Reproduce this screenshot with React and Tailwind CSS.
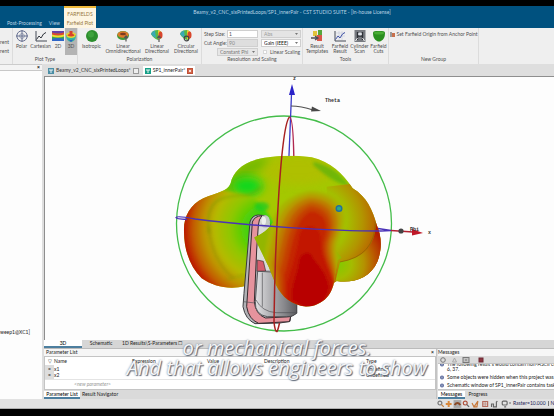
import React, { useState } from 'react';

const messages = [
    'The following result s would contain non-ASCII characters:',
    'Some objects were hidden when this project was last saved.',
    'Schematic window of SP1_innerPair contains tasks in the navigation tree.',
];

function PolarIcon() {
    return (
        <svg viewBox="0 0 12 12" className="w-[12px] h-[12px]" fill="none" stroke="#5a6488" strokeWidth="0.9">
            <circle cx="6" cy="6" r="5.2" />
            <circle cx="6" cy="6" r="2.4" strokeWidth="0.5" />
            <path d="M6 0v12M0 6h12" />
        </svg>
    );
}

function CurveIcon({ blue }) {
    return (
        <svg viewBox="0 0 12 12" className="w-[12px] h-[12px]" fill="none" stroke="#444b57" strokeWidth="1">
            {blue && <path d="M2 3h9M2 6h9M5 1v9M8 1v9" stroke="#b9c3d6" strokeWidth="0.5" />}
            <path d="M1 1v10h11" />
            <path d="M1.5 9.5L4 6l2 2 2.5-4L11 2.5" stroke={blue ? '#4355a8' : '#30343c'} />
        </svg>
    );
}

function Plot2DIcon() {
    return (
        <svg viewBox="0 0 12 12" className="w-[12px] h-[12px]">
            <rect y="1" width="12" height="10" fill="#35a852" />
            <path d="M0 1h12v1.5q-6 2-12 0z" fill="#6a3fa8" />
            <path d="M0 2.5q6 2 12 0v2q-6 2-12 0z" fill="#e34234" />
            <path d="M0 4.5q6 2 12 0v2q-6 2-12 0z" fill="#f2dc31" />
            <path d="M0 9q6-2 12 0v2H0z" fill="#2f66c8" />
        </svg>
    );
}

function Plot3DIcon() {
    return (
        <svg viewBox="0 0 12 12" className="w-[12px] h-[12px]">
            <path d="M1 5q5-3 10 0 0 6-5 7-5-1-5-7z" fill="#36b8a0" />
            <path d="M1 4q5-4 10 0l-1 3q-4 2-8 0z" fill="#e6d630" />
            <path d="M4.5 4V1h3v3q2 0 2 1.5-3 2-7 0 0-1.5 2-1.5z" fill="#d8402c" />
            <path d="M3 9q3 2 6 0l-3 3z" fill="#2c62c0" />
        </svg>
    );
}

function SphereIcon() {
    return (
        <svg viewBox="0 0 12 12" className="w-[12px] h-[12px]">
            <circle cx="6" cy="6" r="6" fill="#2c8e2d" />
            <circle cx="5" cy="4.5" r="3" fill="#3da23c" />
        </svg>
    );
}

function OmniIcon() {
    return (
        <svg viewBox="0 0 12 12" className="w-[12px] h-[12px]">
            <ellipse cx="6" cy="5.5" rx="6" ry="4.5" fill="#3f9a3a" />
            <ellipse cx="6" cy="4.5" rx="5.5" ry="3.3" fill="#dd7a2a" />
            <ellipse cx="6" cy="4" rx="3" ry="1.3" fill="#7b3c20" />
            <path d="M9 11.5V6M7.3 8L9 6l1.7 2" stroke="#555" strokeWidth="1.2" fill="none" />
        </svg>
    );
}

function LobeIcon({ circular }) {
    return (
        <svg viewBox="0 0 12 12" className="w-[12px] h-[12px]">
            <path d="M0 4q1-4 7-4 4 1 4 5 0 4-4 5-5-2-7-6z" fill="#55b848" />
            <path d="M0 4q1-3 4-3.5l1 7.5Q1 6 0 4z" fill="#39a9b4" />
            <path d="M7 0q4 1 4 5 0 4-4 4.5z" fill="#e8cf2f" />
            <ellipse cx="9.5" cy="5" rx="2" ry="3.5" fill="#d9452c" />
            {circular
                ? <circle cx="6.5" cy="8.5" r="2.3" fill="none" stroke="#444" strokeWidth="1.2" />
                : <path d="M8 12V6M6.3 8L8 6l1.7 2" stroke="#555" strokeWidth="1.2" fill="none" />}
        </svg>
    );
}

function TemplatesIcon() {
    return (
        <svg viewBox="0 0 12 12" className="w-[12px] h-[12px]">
            <path d="M7 0h4v5h-4z" fill="#55a63a" />
            <path d="M2 1h4v5H2z" fill="#e2c33a" />
            <path d="M6 5h5v6H6z" fill="#d8564a" />
            <path d="M0 8h6M4 6l3 2-3 2" stroke="#4e4e58" strokeWidth="1.3" fill="none" />
        </svg>
    );
}

function CylinderIcon() {
    return (
        <svg viewBox="0 0 12 12" className="w-[12px] h-[12px]">
            <rect x="0.5" y="0" width="11" height="12" fill="#777a80" />
            <path d="M3.5 2v8M8.5 2v8M3.5 6h5" stroke="#2d3036" strokeWidth="1.3" />
            <ellipse cx="6" cy="4" rx="2" ry="1.5" fill="#dfe2e8" />
            <path d="M1.5 11l2-3M10.5 11l-2-3" stroke="#f2f2f2" strokeWidth="1" />
        </svg>
    );
}

function CutsIcon() {
    return (
        <svg viewBox="0 0 12 12" className="w-[12px] h-[12px]">
            <path d="M0 3q0-2 3-2h6q3 0 3 2 0 6-4 8-2 1-4 0-4-2-4-8z" fill="#2a8f1f" />
            <ellipse cx="6" cy="3" rx="5" ry="1.5" fill="#49ac35" />
        </svg>
    );
}

function RibbonButton({ icon, label, sub, className = '', active }) {
    return (
        <button type="button" className={`flex flex-col items-center pt-[2px] h-[27px] leading-[5px] whitespace-nowrap ${active ? 'bg-[#b4b4b4]' : ''} ${className}`}>
            {icon}
            <span className="mt-[2px]">{label}</span>
            {sub && <span>{sub}</span>}
        </button>
    );
}

function RibbonGroup({ title, className = '', children }) {
    return (
        <section className={`flex flex-col justify-between shrink-0 border-r border-[#dcdcdc] ${className}`}>
            <div className="flex justify-center">{children}</div>
            <h2 className="text-center leading-[5px] pb-[2px]">{title}</h2>
        </section>
    );
}

function Picker({ label, value, disabled, className = '' }) {
    return (
        <span className={`grid items-center h-[8px] border border-[#cfcfcf] ${className}`}>
            <select aria-label={label} disabled={disabled} className="appearance-none [grid-area:1/1] w-full h-[6px] px-[2px]">
                <option>{value}</option>
            </select>
            <svg viewBox="0 0 3 2" className="[grid-area:1/1] justify-self-end mr-[2px] w-[3px] h-[2px] pointer-events-none">
                <path d="M0 0h3L1.5 2z" fill="#777777" />
            </svg>
        </span>
    );
}

function Ribbon() {
    return (
        <div className="flex h-[36px] bg-[#efefef] text-[#505050] overflow-hidden">
            <div className="w-[13px] shrink-0 border-r border-[#dcdcdc] pt-[12px] overflow-hidden">
                <div className="flex flex-col items-end gap-[4px] pr-[3px] leading-[5px]">
                    <span>Transparent</span>
                    <span>Current</span>
                </div>
            </div>
            <RibbonGroup title="Plot Type" className="w-[65px]">
                <RibbonButton icon={<PolarIcon />} label="Polar" className="w-[17px]" />
                <RibbonButton icon={<CurveIcon />} label="Cartesian" className="w-[21px]" />
                <RibbonButton icon={<Plot2DIcon />} label="2D" className="w-[14px]" />
                <RibbonButton icon={<Plot3DIcon />} label="3D" className="w-[12px]" active />
            </RibbonGroup>
            <RibbonGroup title="Polarization" className="w-[124px]">
                <RibbonButton icon={<SphereIcon />} label="Isotropic" className="w-[25px]" />
                <RibbonButton icon={<OmniIcon />} label="Linear" sub="Omnidirectional" className="w-[38px]" />
                <RibbonButton icon={<LobeIcon />} label="Linear" sub="Directional" className="w-[30px]" />
                <RibbonButton icon={<LobeIcon circular />} label="Circular" sub="Directional" className="w-[28px]" />
            </RibbonGroup>
            <RibbonGroup title="Resolution and Scaling" className="w-[101px]">
                <div className="grid grid-cols-[54px_40px] gap-x-[3px] gap-y-[1px] w-full pl-[2px] pt-[2px] leading-[5px] whitespace-nowrap">
                    <label className="flex items-center justify-between h-[8px]">
                        Step Size:
                        <input defaultValue="1" className="w-[31px] h-[8px] px-[1px] bg-white border border-[#cfcfcf]" />
                    </label>
                    <Picker label="Quantity" value="Abs" disabled className="w-[40px] bg-[#e4e4e4] text-[#999999]" />
                    <label className="flex items-center justify-between h-[8px]">
                        Cut Angle:
                        <input disabled defaultValue="90" className="w-[31px] h-[8px] px-[1px] bg-[#dedede] text-[#888888] border border-[#cfcfcf]" />
                    </label>
                    <Picker label="Gain" value="Gain (IEEE)" className="w-[40px] bg-white text-[#111111]" />
                    <Picker label="Cut plane" value="Constant Phi" disabled className="w-[41px] justify-self-end bg-[#e6e6e6] text-[#777777]" />
                    <label className="flex items-center gap-[3px] h-[8px] pl-[2px]">
                        <input type="checkbox" className="appearance-none w-[4px] h-[4px] bg-white border border-[#d8d8d8]" />
                        Linear Scaling
                    </label>
                </div>
            </RibbonGroup>
            <RibbonGroup title="Tools" className="w-[86px]">
                <RibbonButton icon={<TemplatesIcon />} label="Result" sub="Templates" className="w-[27px]" />
                <RibbonButton icon={<CurveIcon blue />} label="Farfield" sub="Result" className="w-[19px]" />
                <RibbonButton icon={<CylinderIcon />} label="Cylinder" sub="Scan" className="w-[20px]" />
                <RibbonButton icon={<CutsIcon />} label="Farfield" sub="Cuts" className="w-[18px]" />
            </RibbonGroup>
            <RibbonGroup title="New Group" className="w-[90px]">
                <button type="button" className="flex items-center gap-[2px] h-[12px] leading-[5px] whitespace-nowrap">
                    <svg viewBox="0 0 5 5" className="w-[5px] h-[5px]">
                        <path d="M0 0h2v5H0z" fill="#9a9a9a" />
                        <path d="M2 1h3v4H2z" fill="#c8704c" />
                    </svg>
                    Set Farfield Origin from Anchor Point
                </button>
            </RibbonGroup>
        </div>
    );
}

function DocTab({ color, label, active }) {
    return (
        <button type="button" className={`flex items-center gap-[2px] h-[9px] px-[2px] leading-[5px] whitespace-nowrap ${active ? 'bg-white text-[#222222]' : 'text-[#333333]'}`}>
            <svg viewBox="0 0 6 6" className="w-[6px] h-[6px] shrink-0">
                <rect width="6" height="6" fill={color} />
                <path d="M1 2h4M3 2v3" stroke="#ffffff" strokeWidth="0.9" />
            </svg>
            <span>{label}</span>
            <svg viewBox="0 0 6 6" className="w-[6px] h-[6px] shrink-0">
                <rect x="0.5" y="0.5" width="5" height="5" fill={active ? '#d4674c' : '#eeeeee'} stroke={active ? '#c05238' : '#9a9a9a'} />
                {active && <path d="M2 2l2 2M4 2L2 4" stroke="#ffffff" strokeWidth="0.8" />}
            </svg>
        </button>
    );
}

// Radiation pattern and phone, drawn on a grid three times finer than the plot
function Pattern() {
    return (
        <g transform="translate(170 150) scale(0.33333)">
            <defs>
                <filter id="soft" x="-20%" y="-20%" width="140%" height="140%">
                    <feGaussianBlur stdDeviation="5" />
                </filter>
                <filter id="softer" x="-30%" y="-30%" width="160%" height="160%">
                    <feGaussianBlur stdDeviation="14" />
                </filter>
                <radialGradient id="leftLobe" gradientUnits="userSpaceOnUse" cx="285" cy="235" r="250">
                    <stop offset="0" stopColor="#1ed41c" />
                    <stop offset="0.25" stopColor="#4fd008" />
                    <stop offset="0.42" stopColor="#8ec800" />
                    <stop offset="0.6" stopColor="#b4ba00" />
                    <stop offset="0.74" stopColor="#bf9200" />
                    <stop offset="0.86" stopColor="#c25c00" />
                    <stop offset="0.94" stopColor="#c02800" />
                    <stop offset="1" stopColor="#b41000" />
                </radialGradient>
                <radialGradient id="rightLobe" gradientUnits="userSpaceOnUse" cx="430" cy="215" r="205">
                    <stop offset="0.4" stopColor="#9cc000" stopOpacity="0" />
                    <stop offset="0.55" stopColor="#a8b400" />
                    <stop offset="0.72" stopColor="#b29400" />
                    <stop offset="0.86" stopColor="#b87200" />
                    <stop offset="1" stopColor="#b44a00" />
                </radialGradient>
                <radialGradient id="rearLobe" gradientUnits="userSpaceOnUse" cx="500" cy="340" r="150">
                    <stop offset="0" stopColor="#7ccc00" />
                    <stop offset="0.3" stopColor="#a4bc00" />
                    <stop offset="0.55" stopColor="#b49200" />
                    <stop offset="0.75" stopColor="#ba5c00" />
                    <stop offset="1" stopColor="#b41e00" />
                </radialGradient>
                <linearGradient id="metal" x1="0" x2="1">
                    <stop offset="0" stopColor="#e2e2e4" />
                    <stop offset="0.35" stopColor="#b2b2b5" />
                    <stop offset="0.7" stopColor="#88888c" />
                    <stop offset="1" stopColor="#5c5c60" />
                </linearGradient>
                <clipPath id="body">
                    <path d="M42 245C40 200 60 165 100 145C140 128 172 126 182 100C188 68 215 40 262 28C305 16 380 14 425 22C482 36 520 72 548 115C590 140 608 180 620 225C636 260 636 300 622 335C600 385 550 400 500 393L490 400L300 330L225 408C180 420 130 410 95 385C60 350 42 300 42 245z" />
                </clipPath>
                <clipPath id="front">
                    <path d="M252 262Q290 245 310 215L260 90H560V300L503 330Q500 350 494 380C492 430 460 468 408 470C365 466 335 440 318 405L296 350z" />
                </clipPath>
            </defs>

            <g clipPath="url(#body)">
                <rect x="30" y="0" width="620" height="430" fill="#a4c800" />
                <ellipse cx="385" cy="60" rx="110" ry="45" fill="#b4bc00" opacity="0.7" filter="url(#softer)" />
                <path d="M150 140Q190 20 300 20L270 60Q200 90 180 150z" fill="#6fb800" filter="url(#softer)" />
                <ellipse cx="232" cy="108" rx="46" ry="28" fill="#0ed81c" filter="url(#softer)" />
                <path d="M-20 120H150L240 138Q290 170 320 240L260 450H-20z" fill="url(#leftLobe)" filter="url(#soft)" />
                <path d="M118 250Q105 170 150 148Q185 134 230 136Q255 130 275 110" fill="none" stroke="#5c9400" strokeWidth="5" opacity="0.45" filter="url(#soft)" />
                <path d="M116 230Q125 330 190 385" fill="none" stroke="#7c7c00" strokeWidth="5" opacity="0.4" filter="url(#soft)" />
                <path d="M170 388Q200 384 222 374" fill="none" stroke="#7ca000" strokeWidth="6" opacity="0.4" filter="url(#soft)" />
                <path d="M430 35Q500 50 540 110Q490 100 430 45z" fill="#4cae10" opacity="0.6" filter="url(#soft)" />
                <path d="M470 110L560 100L660 200L640 420H480z" fill="url(#rightLobe)" />
                <path d="M618 215Q618 320 510 336L490 420H680V215z" fill="url(#rearLobe)" />
                <path d="M616 215Q616 318 510 336" fill="none" stroke="#8c6400" strokeWidth="3" opacity="0.7" />
            </g>

            {/* device */}
            <path d="M240 216Q246 196 264 195L286 197Q298 205 299 222L330 400L380 466V490L362 500L360 514L330 519L255 521Q226 508 219 470L222 430z" fill="#b2b2b6" stroke="#3a3a3e" strokeWidth="3" />
            <path d="M264 197L286 197Q298 205 299 222L330 360H260z" fill="#d9dad8" />
            <path d="M247 216Q254 198 276 197Q266 208 265 226L260 300L253 455Q256 492 286 504L362 500L358 515L266 520Q236 508 230 470z" fill="#e6939d" stroke="#352a2e" strokeWidth="3" />
            <path d="M262 330L280 334L287 363L261 364z" fill="#d45c6c" stroke="#3a2a2e" strokeWidth="2" />
            <path d="M263 364L305 366L380 440V488Q372 500 350 500H292Q254 494 256 455z" fill="url(#metal)" stroke="#444448" strokeWidth="2.5" />
            <path d="M220 455l35 4M258 450q18 35 60 38h62M277 470V368" fill="none" stroke="#505054" strokeWidth="2" />
            <ellipse cx="286" cy="215" rx="14" ry="19" fill="#c4c8c4" />
            <ellipse cx="281" cy="212" rx="7" ry="12" fill="#eef0ee" />

            {/* front lobe, one shape per gain band */}
            <g clipPath="url(#front)">
                <path d="M252 262Q290 245 312 215L420 200L520 330L494 480H250z" fill="#93b600" />
                <g filter="url(#soft)">
                    <path d="M300 480L280 330C298 250 295 145 420 122C530 125 540 200 512 260C490 310 515 330 515 400L480 490z" fill="#a9b400" />
                    <path d="M315 490L292 330C314 260 312 155 420 132C515 135 526 205 502 260C482 305 508 335 505 400L480 490z" fill="#b59c00" />
                    <path d="M325 490L306 340C327 270 327 165 420 144C504 148 514 212 493 262C474 302 500 338 500 400L480 490z" fill="#bd7c00" />
                    <path d="M330 490L318 350C338 285 342 176 422 156C490 161 502 216 482 264C466 304 492 340 498 400L480 490z" fill="#c25c00" />
                    <path d="M335 490L330 360C350 300 356 188 424 168C480 176 490 220 474 266C458 306 484 345 496 400L480 490z" fill="#c44000" />
                    <path d="M342 490L342 375C362 318 370 200 424 182C470 190 478 226 464 268C452 310 480 350 494 400L480 490z" fill="#c42800" />
                    <path d="M348 470L352 395C370 338 382 296 388 256C398 218 446 218 452 262C450 310 474 350 492 400L480 490z" fill="#c21600" />
                    <path d="M364 450C362 400 384 370 386 330C396 300 424 302 430 325C446 345 470 370 478 410C470 460 440 474 400 472z" fill="#b80400" />
                </g>
            </g>
            <ellipse cx="275" cy="170" rx="22" ry="14" fill="#14cc24" opacity="0.7" filter="url(#soft)" />
        </g>
    );
}

function FarfieldPlot() {
    return (
        <svg viewBox="45 77 509 263" className="block w-full h-[263px]" role="img" aria-label="3D farfield plot">
            <circle cx="284" cy="223.5" r="107.5" fill="none" stroke="#44bd4a" strokeWidth="1.3" />

            <path d="M288 180L291.5 94" stroke="#3a3ac8" strokeWidth="1.3" />
            <path d="M292 84l-3 11h6z" fill="#2a22c8" />
            <path d="M291 106q10 0 22 4" fill="none" stroke="#505050" strokeWidth="1.2" />
            <path d="M312 106.5l9 4.5-10 0.5z" fill="#484848" />
            <path d="M294 180C294 145 293 117 289.5 117" fill="none" stroke="#b02850" strokeWidth="1.5" />

            <Pattern />

            {/* cut lines and pointer */}
            <path d="M289.5 117C281 125 275 240 274 322Q275 332 277 331.5Q278 330 279.5 323" fill="none" stroke="#a82020" strokeWidth="1.5" />
            <path d="M187 219.5Q176 219 176 217.5Q177 215.5 195 219C250 226 330 231 381 231L391 230.5L378 228.5" fill="none" stroke="#4a32b8" strokeWidth="1.4" />
            <path d="M391 230.5L413 232" stroke="#b02030" strokeWidth="1.3" />
            <path d="M412 229l11 4-11 2.5z" fill="#c01828" />
            <circle cx="401" cy="231" r="2.6" fill="#444444" />
            <circle cx="339" cy="208.5" r="2.8" fill="#2aa98a" stroke="#236f9c" strokeWidth="1.4" />

            <g fill="#303030" fontSize="5" fontWeight="bold" fontFamily="Liberation Mono, monospace">
                <text x="325" y="102">Theta</text>
                <text x="410" y="231">Phi</text>
                <text x="428" y="234">x</text>
                <text x="293" y="80">z</text>
            </g>
        </svg>
    );
}

function BottomTab({ active, onClick, className = '', children }) {
    return (
        <button type="button" onClick={onClick}
            className={`h-[8px] leading-[5px] px-[2px] whitespace-nowrap border-b-2 ${active ? 'bg-white border-[#4d7f9f] text-black' : 'border-transparent text-[#222222]'} ${className}`}>
            {children}
        </button>
    );
}

function ParameterList() {
    const [tab, setTab] = useState('params');

    return (
        <section className="flex-1 min-w-0 flex flex-col">
            <h2 className="flex justify-between h-[7px] px-[2px] leading-[7px] bg-[#f6f6f6] text-[#222222]">
                Parameter List <button type="button" aria-label="Close" className="font-bold">×</button>
            </h2>
            <div className="h-[34px] bg-white border border-[#c4c4c4] overflow-hidden">
                <table className="w-full table-fixed text-left leading-[6px] text-[#222222]">
                    <thead>
                        <tr className="h-[8px]">
                            <th className="w-[9px] p-0 text-center font-normal">▽</th>
                            <th className="w-[78px] p-0 font-normal">Name</th>
                            <th className="w-[75px] p-0 font-normal">Expression</th>
                            <th className="w-[57px] p-0 font-normal">Value</th>
                            <th className="w-[102px] p-0 font-normal">Description</th>
                            <th className="p-0 font-normal">Type</th>
                        </tr>
                    </thead>
                    <tbody>
                        <tr className="h-[7px]">
                            <td className="p-0 text-center bg-[#dddddd]">=</td>
                            <td className="p-0">x1</td><td /><td /><td />
                            <td className="p-0">Undefined</td>
                        </tr>
                        <tr className="h-[7px] border-b border-[#e4e4e4]">
                            <td className="p-0 text-center bg-[#dddddd]">=</td>
                            <td className="p-0">x2</td><td /><td /><td />
                            <td className="p-0">Undefined</td>
                        </tr>
                        <tr className="h-[9px]">
                            <td className="p-0" />
                            <td colSpan="5" className="p-0 pl-[20px] italic text-[#999999]">&lt;new parameter&gt;</td>
                        </tr>
                    </tbody>
                </table>
            </div>
            <div className="flex h-[9px] bg-[#dadada] pt-[1px]">
                <BottomTab active={tab === 'params'} onClick={() => setTab('params')} className="w-[36px]">Parameter List</BottomTab>
                <BottomTab active={tab === 'results'} onClick={() => setTab('results')} className="w-[40px]">Result Navigator</BottomTab>
            </div>
        </section>
    );
}

function Messages() {
    return (
        <section className="w-[118px] shrink-0 flex flex-col pl-[1px] border-l border-[#c4c4c4]">
            <h2 className="h-[7px] leading-[7px] bg-[#f6f6f6] text-[#222222]">Messages</h2>
            <div className="flex items-center gap-[6px] h-[7px] px-[2px] bg-[#dcdcdc]">
                <svg viewBox="0 0 46 6" className="w-[46px] h-[6px]" fill="none" stroke="#777777">
                    <circle cx="3" cy="3" r="2.3" />
                    <path d="M14.5 1l2 4h-4z" stroke="#aaaaaa" />
                    <rect x="23" y="0.5" width="6" height="5" fill="#c2c2c2" />
                    <path d="M26 2v2" />
                    <rect x="39" y="1" width="4" height="4" fill="#8c3440" stroke="#6c2a34" />
                </svg>
            </div>
            {/* newest message stays in view, older ones run off the top */}
            <ul className="flex flex-col justify-end gap-[3px] h-[27px] pb-[1px] bg-white border-y border-[#c4c4c4] overflow-hidden leading-[5px] text-[#222222]">
                {messages.map((m, i) => (
                    <li key={m} className="flex shrink-0 gap-[3px] pl-[2px] whitespace-nowrap">
                        <svg viewBox="0 0 4 4" className="w-[4px] h-[5px] shrink-0">
                            <circle cx="2" cy="2" r="2" fill="#5a6a9c" />
                            <path d="M2 1v2" stroke="#ffffff" strokeWidth="0.6" />
                        </svg>
                        <span>{m}{i === 0 && <><br />6, 37.</>}</span>
                    </li>
                ))}
            </ul>
            <div className="flex h-[9px] bg-[#dadada] pt-[1px]">
                <BottomTab active className="w-[27px]">Messages</BottomTab>
                <BottomTab className="w-[26px]">Progress</BottomTab>
            </div>
        </section>
    );
}

function StatusBar() {
    return (
        <footer className="flex items-center justify-end h-[10px] bg-[#e2e2e2] border-b border-[#b0b0b0] text-[#222255] overflow-hidden">
            <div className="w-[117px] flex items-center gap-[2px] whitespace-nowrap leading-[5px]">
                <svg viewBox="0 0 76 8" className="w-[74px] h-[8px] shrink-0" fill="none" strokeWidth="1.2">
                    <circle cx="3" cy="3" r="2" stroke="#777777" />
                    <path d="M4.5 4.5L7 7" stroke="#c48040" />
                    <path d="M12 1v6M9 4h6" stroke="#d9893c" strokeWidth="2" />
                    <rect x="17" y="0" width="8" height="8" fill="#aaaaaa" />
                    <path d="M18 5q3-4 6 0" stroke="#8a4a28" strokeWidth="2" />
                    <circle cx="29" cy="3" r="2" stroke="#b0503c" />
                    <path d="M30.5 4.5L33 7" stroke="#666666" />
                    <path d="M36 3l2 4 4-6-1 6h-3" stroke="#c8783a" />
                    <rect x="47" y="1.5" width="5" height="5" stroke="#b46a5c" />
                    <path d="M47 4h5M49.5 1.5v5" stroke="#b46a5c" strokeWidth="0.6" />
                    <path d="M56 7V4h2v3h3V2l1-1" stroke="#666666" />
                    <rect x="67" y="1" width="5" height="4" rx="1" stroke="#666666" />
                    <path d="M69 7h2M74 3h2" stroke="#666666" />
                </svg>
                <span>Raster=10.000</span>
                <span className="border-l border-[#777777] pl-[2px]">Normal</span>
            </div>
        </footer>
    );
}

function App() {
    const [view, setView] = useState('3D');

    return (
        <div className="relative min-h-screen flex flex-col bg-black pt-[6px] text-[5px] leading-[5px] font-['Lato',sans-serif] overflow-hidden">
            {/* Title bar and menu */}
            <header className="flex h-[22px] bg-[#00517f] text-[#b9d3e3]">
                <nav className="w-[64px] shrink-0 flex items-end justify-end gap-[7px] pr-[4px] pb-[2px] whitespace-nowrap overflow-hidden">
                    <a href="#simulation">Simulation</a>
                    <a href="#post">Post-Processing</a>
                    <a href="#view">View</a>
                </nav>
                <div className="w-[32px] shrink-0 flex flex-col items-center justify-end gap-[4px] pb-[2px] border-t-2 border-[#f0b93a] bg-[#fdf5e2] text-[#96763e]">
                    <span>FARFIELDS</span>
                    <a href="#farfield">Farfield Plot</a>
                </div>
                <h1 className="flex-1 pt-[4px] pr-[66px] text-center whitespace-nowrap">
                    Beamy_v2_CNC_sixPrintedLoops/SP1_innerPair - CST STUDIO SUITE - [In-house License]
                </h1>
            </header>

            <Ribbon />

            <main className="flex bg-[#dedede]">
                <aside className="w-[42px] shrink-0 bg-[#fdfdfd] border-t border-[#cccccc]">
                    <div className="flex justify-end h-[6px] pr-[2px] border-b border-[#c8c8c8] bg-[#f4f4f4]">
                        <button type="button" aria-label="Close tree" className="font-bold">×</button>
                    </div>
                    <p className="pt-[259px] text-[#222222]">weep1@XC1]</p>
                </aside>

                <div className="flex-1 min-w-0 flex flex-col pl-[2px]">
                    <div className="flex items-end gap-[2px] h-[12px] pl-[2px] pb-[1px]">
                        <DocTab color="#4c8fa6" label="Beamy_v2_CNC_sixPrintedLoops*" />
                        <DocTab color="#18a088" label="SP1_innerPair*" active />
                    </div>
                    <div className="bg-[#fdfdfd] border-l border-t border-[#8e8e8e] overflow-hidden">
                        <FarfieldPlot />
                    </div>
                    <div className="flex h-[9px] bg-[#d6d6d6] border-b border-[#bbbbbb]">
                        <BottomTab active={view === '3D'} onClick={() => setView('3D')} className="w-[38px]">3D</BottomTab>
                        <BottomTab active={view === 'Schematic'} onClick={() => setView('Schematic')} className="w-[38px]">Schematic</BottomTab>
                        <BottomTab active={view === '1D'} onClick={() => setView('1D')} className="w-[64px]">1D Results\S-Parameters ☐</BottomTab>
                    </div>
                    <div className="flex">
                        <ParameterList />
                        <Messages />
                    </div>
                </div>
            </main>

            <StatusBar />

            {/* Subtitles */}
            <p className="absolute inset-x-0 bottom-[38px] text-center italic text-[20px] leading-[20px] font-['Open_Sans',sans-serif] text-[#f6f7f9] [text-shadow:1px_1px_1px_#5c6676,0_0_2px_#6e7888]">
                or mechanical forces.<br />And that allows engineers to show
            </p>
        </div>
    );
}

export default App;
